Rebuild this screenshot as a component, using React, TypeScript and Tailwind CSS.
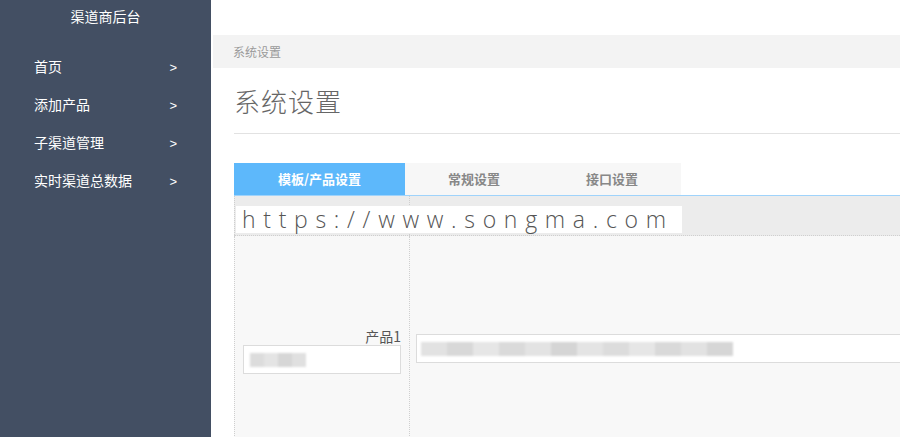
import React from "react";

const menu = ["首页", "添加产品", "子渠道管理", "实时渠道总数据"];
const tabs = ["模板/产品设置", "常规设置", "接口设置"];

// blurred blocks standing in for masked values
const leftBlur = ["#dcdcdc", "#e4e4e4", "#d6d6d6", "#e0e0e0"];
const rightBlur = [
  "#e2e2e2", "#d8d8d8", "#e6e6e6", "#dadada", "#e3e3e3", "#d5d5d5",
  "#e4e4e4", "#dcdcdc", "#e6e6e6", "#d9d9d9", "#e2e2e2", "#d6d6d6",
];

const Blur: React.FC<{ colors: string[]; w: number }> = ({ colors, w }) => (
  <div className="flex h-[14px] blur-[1px]">
    {colors.map((c, i) => (
      <div key={i} className="h-full" style={{ width: w, backgroundColor: c }} />
    ))}
  </div>
);

export default function App() {
  return (
    <div className="flex h-[437px] w-[900px] overflow-hidden bg-white font-['Noto_Sans_CJK_SC','Noto_Sans',sans-serif]">
      <aside className="w-[211px] shrink-0 bg-[#434f63] text-white">
        <div className="flex h-[32px] items-center justify-center text-[14px]">渠道商后台</div>
        <ul className="mt-[15px]">
          {menu.map((m) => (
            <li key={m} className="flex h-[38px] items-center pl-[34px] pr-[34px] text-[14px]">
              <span className="flex-1">{m}</span>
              <span className="pt-[3px] font-['Liberation_Sans',sans-serif] text-[13px]">&gt;</span>
            </li>
          ))}
        </ul>
      </aside>

      <main className="min-w-0 flex-1">
        <div className="h-[35px]" />
        <div className="ml-[2px] flex h-[33px] items-center bg-[#f3f3f3] pl-[20px] text-[12px] text-[#9a9a9a]">
          系统设置
        </div>

        <div className="pl-[23px]">
          <div className="flex h-[66px] items-center border-b border-[#e2e2e2] text-[26px] font-extralight tracking-[1px] text-[#666]">
            系统设置
          </div>

          <div className="mt-[29px] flex h-[33px] border-b border-[#9fd3fb]">
            {tabs.map((t, i) => (
              <div
                key={t}
                className={
                  i === 0
                    ? "flex w-[171px] items-center justify-center bg-[#5db8fb] text-[13px] font-bold text-white"
                    : "flex w-[138px] items-center justify-center bg-[#f7f7f7] text-[13px] font-bold text-[#888]"
                }
              >
                {t}
              </div>
            ))}
          </div>

          <div className="relative">
            <div className="flex h-[40px] border-b border-dotted border-[#cfcfcf] bg-[#ececec]">
              <div className="w-[176px] border-x border-dotted border-[#cfcfcf]" />
              <div className="flex-1" />
            </div>
            <div className="flex h-[220px] bg-[#f8f8f8]">
              <div className="w-[176px] border-x border-dotted border-[#cfcfcf] pt-[92px]">
                <div className="pr-[8px] text-right text-[14px] leading-[17px] text-[#555]">产品1</div>
                <div className="ml-[8px] mr-[8px] flex h-[29px] items-center border border-[#dcdcdc] bg-white pl-[6px]">
                  <Blur colors={leftBlur} w={14} />
                </div>
              </div>
              <div className="flex-1 pt-[98px] pl-[6px]">
                <div className="flex h-[29px] items-center border border-r-0 border-[#dcdcdc] bg-white pl-[4px]">
                  <Blur colors={rightBlur} w={26} />
                </div>
              </div>
            </div>

            <div className="absolute left-[2px] top-[10px] flex h-[27px] w-[446px] items-center bg-white pl-[6px] font-['Open_Sans','Liberation_Sans',sans-serif] text-[23px] font-light leading-none tracking-[7.7px] text-[#555]">
              https://www.songma.com
            </div>
          </div>
        </div>
      </main>
    </div>
  );
}
